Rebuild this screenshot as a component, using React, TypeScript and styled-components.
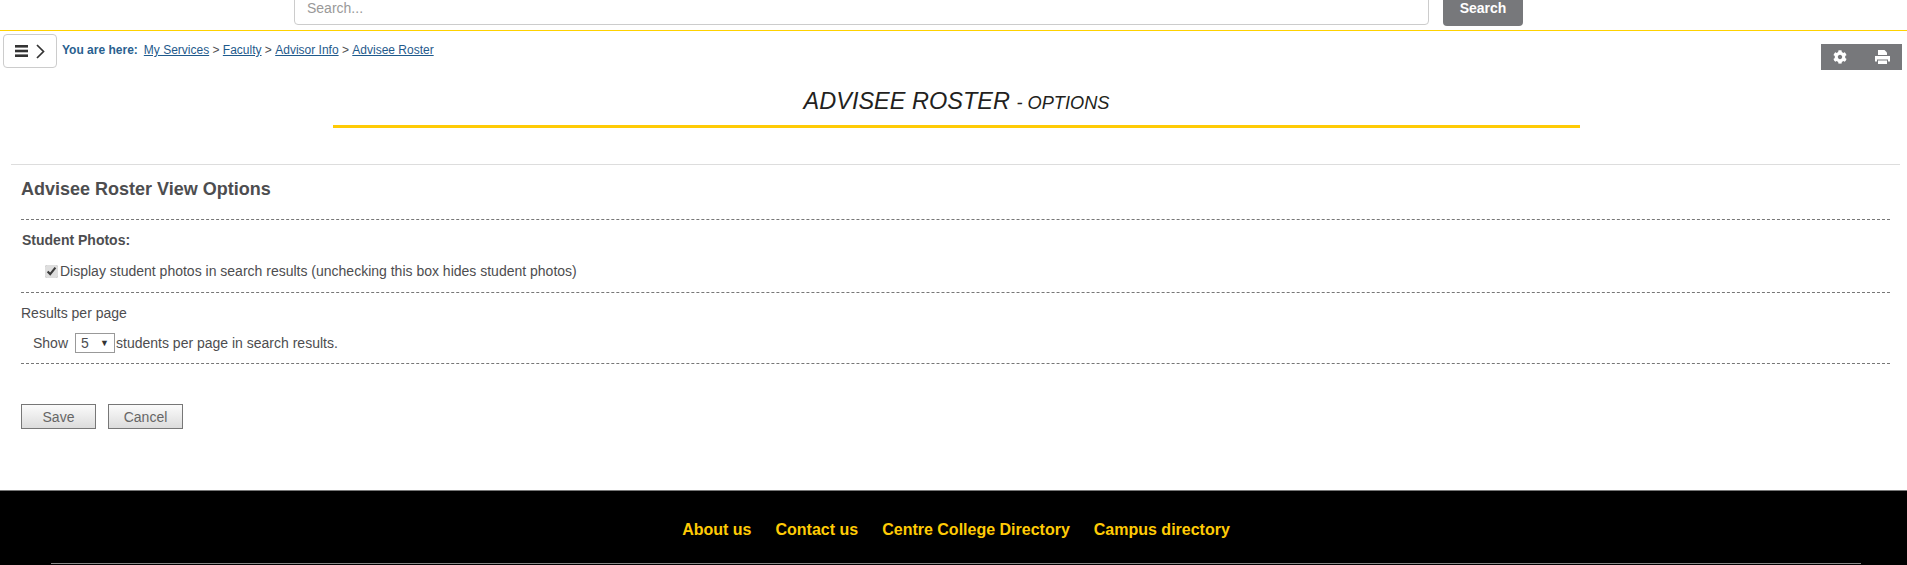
import React from "react"
import styled, { createGlobalStyle } from "styled-components"
import { FaCog } from "react-icons/fa"

const GlobalStyle = createGlobalStyle`
html, body {
    margin: 0;
    padding: 0;
    background: #fff;
    font-family: "Liberation Sans", Arial, sans-serif;
    color: #4d4d4f;
    font-size: 14px;
}
`
const Page = styled.div`
width: 1907px;
height: 565px;
overflow: hidden;
display: flex;
flex-direction: column;
`
const Header = styled.header`
flex: none;
height: 31px;
box-sizing: border-box;
border-bottom: 1px solid #ffd200;
display: flex;
align-items: flex-end;
padding: 0 0 5px 294px;
gap: 14px;
`
const SearchInput = styled.div`
width: 1135px;
height: 34px;
box-sizing: border-box;
flex: none;
border: 1px solid #ccc;
border-radius: 4px;
padding: 0 12px;
display: flex;
align-items: center;
color: #999;
font-size: 14px;
line-height: 20px;
`
const SearchButton = styled.div`
width: 80px;
height: 36px;
margin-bottom: -1px;
flex: none;
border-radius: 4px;
background: #77787b;
color: #fff;
font-weight: bold;
font-size: 14px;
display: flex;
align-items: center;
justify-content: center;
`
const TopRow = styled.div`
flex: none;
height: 53px;
display: flex;
align-items: flex-start;
padding: 3px 5px 0 3px;
`
const MenuToggle = styled.div`
width: 54px;
height: 34px;
box-sizing: border-box;
border: 1px solid #ccc;
border-radius: 4px;
display: flex;
align-items: center;
justify-content: center;
gap: 8px;
color: #333;
`
const Crumbs = styled.div`
margin-left: 5px;
height: 34px;
display: flex;
align-items: center;
margin-top: -1px;
font-size: 12px;
color: #4d4d4f;
white-space: pre;
`
const YouAreHere = styled.strong`
color: #2a5f8f;
margin-right: 6px;
`
const CrumbLink = styled.a`
color: #1f5a8c;
text-decoration: underline;
`
const Tools = styled.div`
margin-left: auto;
margin-top: 10px;
width: 81px;
height: 26px;
background: #77787b;
color: #fff;
display: flex;
align-items: center;
justify-content: space-between;
box-sizing: border-box;
padding: 0 12px;
font-size: 14px;
`
const TitleBlock = styled.div`
flex: none;
margin-left: 333px;
width: 1247px;
height: 28px;
padding-bottom: 10px;
border-bottom: 3px solid #ffcb05;
text-align: center;
font-style: italic;
font-size: 23.5px;
line-height: 28px;
color: #231f20;
`
const TitleSub = styled.small`
font-size: 18.2px;
`
const Content = styled.main`
flex: none;
margin: 36px 7px 0 11px;
border-top: 1px solid #ddd;
height: 325px;
padding: 0 10px;
`
const SectionTitle = styled.h2`
margin: 0;
height: 54px;
box-sizing: border-box;
padding-bottom: 6px;
display: flex;
align-items: center;
font-size: 18px;
font-weight: bold;
color: #4d4d4f;
`
const Group = styled.section`
border-top: 1px dashed #777;
`
const StudentPhotos = styled(Group)`
height: 72px;
`
const ResultsGroup = styled(Group)`
height: 70px;
`
const GroupLabel = styled.div`
margin: 12px 0 0 1px;
font-size: 14px;
line-height: 17px;
font-weight: bold;
`
const PlainLabel = styled.div`
margin-top: 12px;
font-size: 14px;
line-height: 17px;
`
const CheckRow = styled.label`
display: flex;
align-items: center;
margin: 14px 0 0 24px;
line-height: 17px;
`
const Check = styled.input`
width: 13px;
height: 13px;
margin: 0 2px 0 0;
accent-color: #dedede;
`
const ShowRow = styled.div`
display: flex;
align-items: center;
margin: 10px 0 0 12px;
height: 22px;
`
const PerPage = styled.div`
width: 40px;
height: 20px;
box-sizing: border-box;
margin: 0 1px 0 7px;
border: 1px solid #999;
display: flex;
align-items: center;
justify-content: space-between;
padding: 0 5px;
`
const Caret = styled.span`
font-size: 9px;
color: #333;
`
const Actions = styled.div`
border-top: 1px dashed #777;
padding-top: 40px;
display: flex;
gap: 12px;
`
const ActionButton = styled.button`
width: 75px;
height: 25px;
box-sizing: border-box;
border: 1px solid #777;
background: linear-gradient(#fbfbfb, #dcdcdc);
color: #666;
font-family: inherit;
font-size: 14px;
padding: 0;
`
const Footer = styled.footer`
flex: 1;
background: #000;
border-top: 1px solid #777;
`
const FooterLinks = styled.nav`
display: flex;
justify-content: center;
gap: 24px;
padding: 29px 0 0 5px;
height: 43px;
`
const FooterLink = styled.a`
color: #ffcb05;
font-weight: bold;
font-size: 16px;
line-height: 20px;
`
const FooterRule = styled.div`
margin-left: 51px;
height: 1px;
background: #888;
width: 1810px;
`

const App = (): JSX.Element => {
    return (
        <Page>
            <GlobalStyle />
            <Header>
                <SearchInput>Search...</SearchInput>
                <SearchButton>Search</SearchButton>
            </Header>
            <TopRow>
                <MenuToggle>
                    <svg width="13" height="12" viewBox="0 0 13 12" fill="#333">
                        <rect x="0" y="0" width="13" height="2.6" />
                        <rect x="0" y="4.7" width="13" height="2.6" />
                        <rect x="0" y="9.4" width="13" height="2.6" />
                    </svg>
                    <svg width="9" height="15" viewBox="0 0 9 15" fill="none" stroke="#333" strokeWidth="1.7">
                        <path d="M1 1 L7.5 7.5 L1 14" />
                    </svg>
                </MenuToggle>
                <Crumbs>
                    <YouAreHere>You are here:</YouAreHere>
                    {" "}<CrumbLink>My Services</CrumbLink> &gt; <CrumbLink>Faculty</CrumbLink> &gt; <CrumbLink>Advisor Info</CrumbLink> &gt; <CrumbLink>Advisee Roster</CrumbLink>
                </Crumbs>
                <Tools>
                    <FaCog size={14} />
                    <svg width="15" height="14" viewBox="0 0 15 14" fill="#fff">
                        <path d="M3 0h6.5L12 2.5V5H3z" />
                        <path d="M0 6h15v5.5h-2V9.5H2v2H0z" />
                        <rect x="3" y="10.5" width="9" height="3.5" />
                    </svg>
                </Tools>
            </TopRow>
            <TitleBlock>
                ADVISEE ROSTER <TitleSub>- OPTIONS</TitleSub>
            </TitleBlock>
            <Content>
                <SectionTitle>Advisee Roster View Options</SectionTitle>
                <StudentPhotos>
                    <GroupLabel>Student Photos:</GroupLabel>
                    <CheckRow>
                        <Check type="checkbox" defaultChecked />
                        Display student photos in search results (unchecking this box hides student photos)
                    </CheckRow>
                </StudentPhotos>
                <ResultsGroup>
                    <PlainLabel>Results per page</PlainLabel>
                    <ShowRow>
                        Show
                        <PerPage>5<Caret>▼</Caret></PerPage>
                        students per page in search results.
                    </ShowRow>
                </ResultsGroup>
                <Actions>
                    <ActionButton>Save</ActionButton>
                    <ActionButton>Cancel</ActionButton>
                </Actions>
            </Content>
            <Footer>
                <FooterLinks>
                    <FooterLink>About us</FooterLink>
                    <FooterLink>Contact us</FooterLink>
                    <FooterLink>Centre College Directory</FooterLink>
                    <FooterLink>Campus directory</FooterLink>
                </FooterLinks>
                <FooterRule />
            </Footer>
        </Page>
    )
}
export default App
